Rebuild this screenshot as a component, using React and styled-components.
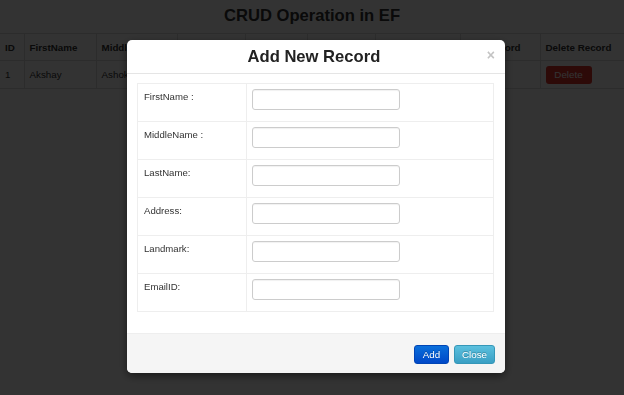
import React from "react";
import styled, { createGlobalStyle } from "styled-components";

const Global = createGlobalStyle`
  html, body { margin: 0; padding: 0; background: #fff; }
  body {
    font-family: "Liberation Sans", Arial, Helvetica, sans-serif;
    font-size: 9.8px;
    color: #333;
  }
  * { box-sizing: border-box; }
`;

const Page = styled.div`
  width: 624px;
  height: 395px;
  overflow: hidden;
`;

const PageTitle = styled.h2`
  margin: 0;
  height: 33px;
  line-height: 31px;
  text-align: center;
  font-size: 16.6px;
  font-weight: bold;
  color: #333;
`;

const DataTable = styled.table`
  width: 624px;
  border-collapse: collapse;
  table-layout: fixed;
`;

const Th = styled.th`
  height: 27px;
  padding: 0 5px;
  text-align: left;
  font-weight: bold;
  border-top: 1px solid #ddd;
  border-left: ${(p) => (p.$first ? "none" : "1px solid #ddd")};
  border-bottom: 1px solid #ddd;
  white-space: nowrap;
  overflow: hidden;
`;

const Td = styled.td`
  height: 28px;
  padding: 0 5px;
  border-left: ${(p) => (p.$first ? "none" : "1px solid #ddd")};
  border-bottom: 1px solid #ddd;
  white-space: nowrap;
  overflow: hidden;
`;

const SmallButton = styled.button`
  width: ${(p) => p.$w}px;
  height: 18px;
  padding: 0;
  border: none;
  border-radius: 3px;
  font-family: inherit;
  font-size: 9.8px;
  color: #fff;
  background: ${(p) => p.$bg};
`;

const Backdrop = styled.div`
  position: fixed;
  inset: 0;
  background: rgba(0, 0, 0, 0.8);
`;

const Modal = styled.div`
  position: fixed;
  top: 40px;
  left: 127px;
  width: 378px;
  height: 333px;
  background: #fff;
  border-radius: 5px;
  box-shadow: 0 3px 9px rgba(0, 0, 0, 0.5);
  display: flex;
  flex-direction: column;
  overflow: hidden;
`;

const ModalHeader = styled.div`
  height: 34px;
  border-bottom: 1px solid #e5e5e5;
  display: flex;
  align-items: center;
  padding: 0 10px 0 14px;
`;

const ModalTitle = styled.h3`
  flex: 1;
  margin: 0;
  text-align: center;
  font-size: 16.6px;
  font-weight: bold;
  color: #222;
  line-height: 33px;
`;

const CloseX = styled.span`
  font-size: 14px;
  font-weight: bold;
  color: #c4c4c4;
  line-height: 1;
  margin-top: -4px;
`;

const ModalBody = styled.div`
  flex: 1;
  padding: 9px 11px 0 10px;
`;

const FormTable = styled.table`
  width: 357px;
  border-collapse: collapse;
  table-layout: fixed;
  border: 1px solid #eee;
`;

const LabelCell = styled.td`
  width: 109px;
  height: 38px;
  padding: 6px 6px 0 6px;
  vertical-align: top;
  border: 1px solid #eee;
  color: #333;
  font-size: 9.6px;
  line-height: 14px;
`;

const InputCell = styled.td`
  height: 38px;
  padding: 5px 5px 0 5px;
  vertical-align: top;
  border: 1px solid #eee;
`;

const TextInput = styled.input`
  display: block;
  width: 148px;
  height: 21px;
  border: 1px solid #ccc;
  border-radius: 3px;
  box-shadow: inset 0 1px 1px rgba(0, 0, 0, 0.06);
  padding: 0 4px;
  font-family: inherit;
  font-size: 9.8px;
  background: #fff;
`;

const ModalFooter = styled.div`
  height: 40px;
  background: #f5f5f5;
  border-top: 1px solid #eee;
  display: flex;
  justify-content: flex-end;
  align-items: center;
  gap: 5px;
  padding: 0 10px 0 0;
`;

const FooterButton = styled.button`
  width: ${(p) => p.$w}px;
  height: 19px;
  padding: 0;
  border: 1px solid ${(p) => p.$border};
  border-radius: 3px;
  font-family: inherit;
  font-size: 9.8px;
  color: #fff;
  background: linear-gradient(to bottom, ${(p) => p.$from}, ${(p) => p.$to});
  text-shadow: 0 -1px 0 rgba(0, 0, 0, 0.25);
  margin-top: 1px;
`;

const columns = [
  { name: "ID", w: 24 },
  { name: "FirstName", w: 72 },
  { name: "MiddleName", w: 81 },
  { name: "LastName", w: 68 },
  { name: "Address", w: 62 },
  { name: "Landmark", w: 68 },
  { name: "EmailID", w: 85 },
  { name: "Edit Record", w: 80 },
  { name: "Delete Record", w: 84 },
];

const fields = ["FirstName :", "MiddleName :", "LastName:", "Address:", "Landmark:", "EmailID:"];

export default function App() {
  return (
    <>
      <Global />
      <Page>
        <PageTitle>CRUD Operation in EF</PageTitle>
        <DataTable>
          <colgroup>
            {columns.map((c) => (
              <col key={c.name} style={{ width: c.w }} />
            ))}
          </colgroup>
          <thead>
            <tr>
              {columns.map((c, i) => (
                <Th key={c.name} $first={i === 0}>
                  {c.name}
                </Th>
              ))}
            </tr>
          </thead>
          <tbody>
            <tr>
              <Td $first>1</Td>
              <Td>Akshay</Td>
              <Td>Ashok</Td>
              <Td>Kumar</Td>
              <Td>Pune</Td>
              <Td>Station</Td>
              <Td>akshay@mail.com</Td>
              <Td>
                <SmallButton $w={36} $bg="#428bca">Edit</SmallButton>
              </Td>
              <Td>
                <SmallButton $w={46} $bg="#e0322c">Delete</SmallButton>
              </Td>
            </tr>
          </tbody>
        </DataTable>
      </Page>
      <Backdrop />
      <Modal>
        <ModalHeader>
          <ModalTitle>Add New Record</ModalTitle>
          <CloseX>×</CloseX>
        </ModalHeader>
        <ModalBody>
          <FormTable>
            <tbody>
              {fields.map((f) => (
                <tr key={f}>
                  <LabelCell>{f}</LabelCell>
                  <InputCell>
                    <TextInput type="text" />
                  </InputCell>
                </tr>
              ))}
            </tbody>
          </FormTable>
        </ModalBody>
        <ModalFooter>
          <FooterButton $w={35} $from="#0a6fdb" $to="#0048c8" $border="#0045b5">
            Add
          </FooterButton>
          <FooterButton $w={41} $from="#5bc0de" $to="#3a9fc4" $border="#3597b8">
            Close
          </FooterButton>
        </ModalFooter>
      </Modal>
    </>
  );
}
